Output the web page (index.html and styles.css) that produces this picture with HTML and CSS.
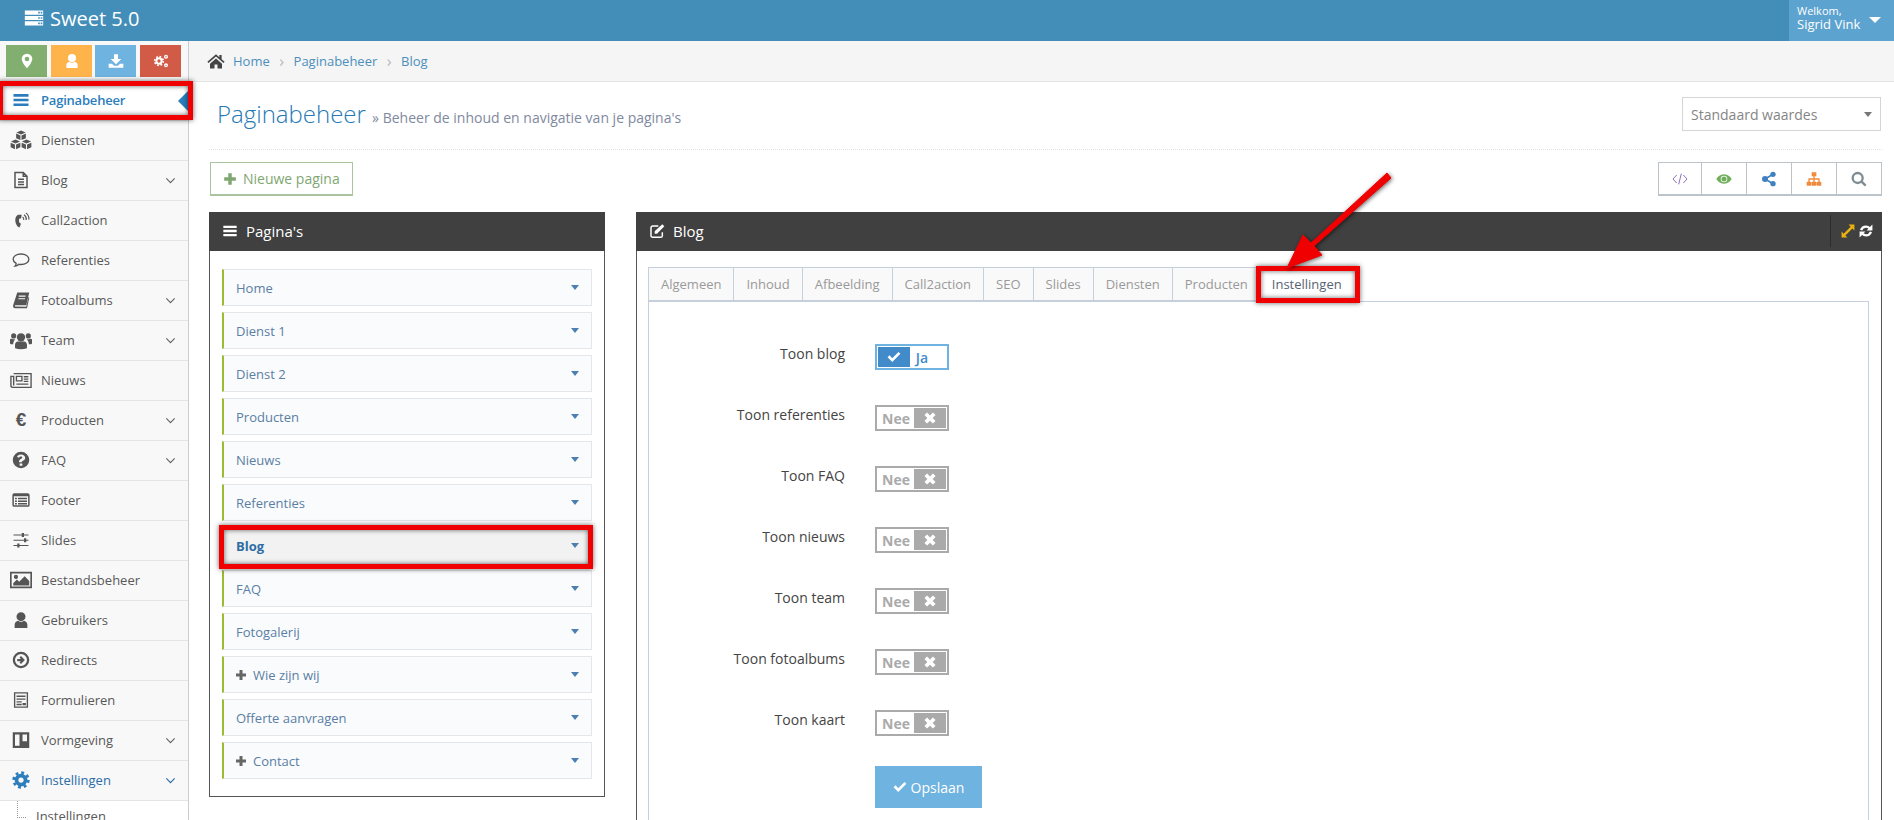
FILE: index.html
```html
<!DOCTYPE html>
<html lang="nl">
<head>
  <meta charset="UTF-8" />
  <title>Sweet 5.0 | Paginabeheer</title>
  <link rel="stylesheet" href="styles.css">
</head>
<body>

<svg class="sprite" xmlns="http://www.w3.org/2000/svg">
  <symbol id="i-server" viewBox="0 0 24 24"><path fill-rule="evenodd" d="M1 3h22v5H1zM17 4.500v2h2v-2zM20 4.500v2h2v-2zM1 9.500h22v5H1zM17 11v2h2v-2zM20 11v2h2v-2zM1 16h22v5H1zM17 17.500v2h2v-2zM20 17.500v2h2v-2z"/></symbol>
  <symbol id="i-marker" viewBox="0 0 24 24"><path fill-rule="evenodd" d="M12 1a8 8 0 0 0-8 8c0 5 8 14 8 14s8-9 8-14a8 8 0 0 0-8-8zm0 11.500a3.500 3.500 0 1 1 0-7 3.500 3.500 0 0 1 0 7z"/></symbol>
  <symbol id="i-user" viewBox="0 0 24 24"><path d="M12 1.500a6 6 0 1 1 0 12 6 6 0 0 1 0-12zM3.500 22.500v-4c0-3.500 2.500-5 4.500-5.500 1 1 2.500 1.500 4 1.500s3-.5 4-1.500c2 .5 4.500 2 4.500 5.500v4z"/></symbol>
  <symbol id="i-download" viewBox="0 0 24 24"><path d="M9 2h6v7h5l-8 8-8-8h5zM1 16h5l3 3h6l3-3h5v6H1z"/></symbol>
  <symbol id="i-cogs" viewBox="0 0 24 24"><g fill="none" stroke="currentColor"><circle cx="9" cy="12" r="4" stroke-width="3"/><circle cx="9" cy="12" r="6.500" stroke-width="2.500" stroke-dasharray="2.600 2.500"/><circle cx="19.500" cy="5.500" r="2" stroke-width="2"/><circle cx="19.500" cy="18.500" r="2" stroke-width="2"/></g></symbol>
  <symbol id="i-bars" viewBox="0 0 24 24"><path d="M2 4h20v3.500H2zM2 10.250h20v3.500H2zM2 16.500h20V20H2z"/></symbol>
  <symbol id="i-cubes" viewBox="0 0 24 24"><path d="M12 1.500l5 2.200-5 2.200-5-2.200zM6.700 5l4.700 2v5l-4.700-2zM17.300 5l-4.700 2v5l4.700-2zM6 11.500l5 2.200-5 2.200-5-2.200zM.7 15l4.700 2v5L.7 20zM11.300 15l-4.700 2v5l4.700-2zM18 11.500l5 2.200-5 2.200-5-2.200zM12.700 15l4.700 2v5l-4.700-2zM23.300 15l-4.700 2v5l4.700-2z"/></symbol>
  <symbol id="i-file" viewBox="0 0 24 24"><path fill="none" stroke="currentColor" stroke-width="2" d="M4 2h11l5 5v15H4zM15 2v5h5M8 11h8M8 14.500h8M8 18h8"/></symbol>
  <symbol id="i-phone" viewBox="0 0 24 24"><path d="M8 5c-3 2-4 5-3.500 9S7 21 10 22l2-5-2-1.500c-1-2-1-4 0-5.500h2l1-5z"/><path fill="none" stroke="currentColor" stroke-width="1.500" d="M14 8a3.500 3.500 0 0 1 1.500 4M16 5a7 7 0 0 1 3 7M18.500 2.500a10 10 0 0 1 4 9"/></symbol>
  <symbol id="i-comment" viewBox="0 0 24 24"><path fill="none" stroke="currentColor" stroke-width="1.800" d="M12 4c6 0 10.500 3 10.500 7s-4.500 7-10.500 7c-1 0-2 0-3-.3-1.500 1.500-3.500 2.300-5 2.500 1-1 1.500-2.500 1.500-3.700C3 15 1.500 13 1.500 11c0-4 4.500-7 10.500-7z"/></symbol>
  <symbol id="i-book" viewBox="0 0 24 24"><path d="M7 2h16l-4 17H5c-1 0-1.500.5-1 1.500l15 .5 3-13 1 1-3 14H4c-2 0-3-2-2.500-4zM9 6v1.500h9V6zM8.500 9.500V11h9V9.500z" fill-rule="evenodd"/></symbol>
  <symbol id="i-group" viewBox="0 0 24 24"><circle cx="12" cy="9" r="4.500"/><circle cx="4" cy="7.500" r="2.800"/><circle cx="20" cy="7.500" r="2.800"/><path d="M5.500 21v-4c0-2 1.500-3.500 3-3.500h7c1.500 0 3 1.500 3 3.500v4c-4 1.500-9 1.500-13 0zM0 11.500c0-.8 1-1 2-1 1 .8 2.500.8 3.500.3-.3 1-1 1.700-1.500 3-.5 1-.5 2-.5 2.700H1c-.5 0-1-.5-1-1zM24 11.500c0-.8-1-1-2-1-1 .8-2.500.8-3.500.3.300 1 1 1.700 1.500 3 .5 1 .5 2 .5 2.700H23c.5 0 1-.5 1-1z"/></symbol>
  <symbol id="i-news" viewBox="0 0 24 24"><path fill="none" stroke="currentColor" stroke-width="1.500" d="M4 5h19v15H3c-1.200 0-2-.8-2-2V8h3v10M7 8h6v5H7zM15 8.500h5M15 11h5M15 13.500h5M7 16.500h13"/></symbol>
  <symbol id="i-question" viewBox="0 0 24 24"><path fill-rule="evenodd" d="M12 1a11 11 0 1 1 0 22 11 11 0 0 1 0-22zM10.200 16.500v3.300h3.600v-3.300zM12 4.500c-3 0-4.700 1.500-5.200 3.500l2.600 1c.4-1 1.200-1.700 2.400-1.700 1.300 0 2 .6 2 1.400 0 1.800-4.400 1.900-4.400 5.600V15h3.600c0-2.400 4.600-2.300 4.600-6.100 0-2.700-2.600-4.400-5.600-4.400z"/></symbol>
  <symbol id="i-list" viewBox="0 0 24 24"><path fill-rule="evenodd" d="M3 3h18a2.500 2.500 0 0 1 2.500 2.500v13A2.500 2.500 0 0 1 21 21H3a2.500 2.500 0 0 1-2.500-2.500v-13A2.500 2.500 0 0 1 3 3zM2.500 7v11.500c0 .300.200.500.500.500h18c.300 0 .500-.2.500-.5V7zM4 9h2.500v2H4zM8 9h12v2H8zM4 12.500h2.500v2H4zM8 12.500h12v2H8zM4 16h2.500v2H4zM8 16h12v2H8z"/></symbol>
  <symbol id="i-sliders" viewBox="0 0 24 24"><path d="M2 4.500h20v1.500H2zM2 11.500h20V13H2zM2 18.500h20V20H2z"/><path d="M13 2.500h3v5.500h-3zM16 9.500h3V15h-3zM7 16.500h3V22H7z"/></symbol>
  <symbol id="i-picture" viewBox="0 0 24 24"><path fill-rule="evenodd" d="M0 3h24v18H0zM1.800 4.800v14.400h20.400V4.800z"/><circle cx="6.500" cy="8.700" r="2.300"/><path d="M3.500 18v-2.500l4-4 2.500 2.500 6-6 5 5V18z"/></symbol>
  <symbol id="i-circle-arrow" viewBox="0 0 24 24"><path fill-rule="evenodd" d="M12 1a11 11 0 1 1 0 22 11 11 0 0 1 0-22zM12 4a8 8 0 1 0 0 16 8 8 0 0 0 0-16zM12 6.800l5.200 5.200-5.200 5.200-2-2 1.800-1.700H7v-3h4.800L10 8.800z"/></symbol>
  <symbol id="i-form" viewBox="0 0 24 24"><path fill="none" stroke="currentColor" stroke-width="1.800" d="M3.500 2.500h17v19h-17zM6 7h12M6 10.800h12M6 14.500h7M6 18h7" /><path d="M14 16h4.500v3H14z"/></symbol>
  <symbol id="i-trello" viewBox="0 0 24 24"><path fill-rule="evenodd" d="M1 1.500h22v21H1zM4 4.500v15h6v-15zM14 4.500v9h6v-9z"/></symbol>
  <symbol id="i-cog" viewBox="0 0 24 24"><g fill="none" stroke="currentColor"><circle cx="12" cy="12" r="6" stroke-width="5"/><circle cx="12" cy="12" r="9.800" stroke-width="3.500" stroke-dasharray="3.800 3.900"/></g></symbol>
  <symbol id="i-home" viewBox="0 0 24 24"><path d="M12 3L.5 13l1.500 1.700L12 6l10 8.700 1.500-1.700-4-3.500V4h-3v3zM4 15.500V22h6v-5.500h4V22h6v-6.500L12 8.500z"/></symbol>
  <symbol id="i-chevron" viewBox="0 0 24 24"><path fill="none" stroke="currentColor" stroke-width="2.600" d="M3 7.500l9 9 9-9"/></symbol>
  <symbol id="i-plus" viewBox="0 0 24 24"><path d="M9 2h6v7h7v6h-7v7H9v-7H2V9h7z"/></symbol>
  <symbol id="i-edit" viewBox="0 0 24 24"><path fill="none" stroke="currentColor" stroke-width="2.200" d="M20 14v5a2.500 2.500 0 0 1-2.500 2.500h-12A2.500 2.500 0 0 1 3 19V7a2.500 2.500 0 0 1 2.500-2.500H14"/><path d="M20 2l3 3-11 11H8.500v-3.500z"/></symbol>
  <symbol id="i-code" viewBox="0 0 24 24"><path fill="none" stroke="currentColor" stroke-width="1.500" d="M7 6l-5.500 6L7 18M17 6l5.500 6L17 18M14 4l-4 16"/></symbol>
  <symbol id="i-eye" viewBox="0 0 24 24"><path fill-rule="evenodd" d="M12 5c5.500 0 9.500 3.500 11.500 7-2 3.500-6 7-11.500 7S2.500 15.500.5 12C2.500 8.500 6.500 5 12 5zM12 7a5 5 0 1 0 0 10 5 5 0 0 0 0-10z"/><circle cx="12" cy="12" r="3.800"/></symbol>
  <symbol id="i-share" viewBox="0 0 24 24"><circle cx="18" cy="5" r="4"/><circle cx="18" cy="19" r="4"/><circle cx="6" cy="12" r="4.500"/><path fill="none" stroke="currentColor" stroke-width="2.500" d="M18 5L6 12l12 7"/></symbol>
  <symbol id="i-sitemap" viewBox="0 0 24 24"><path d="M8.500 2h7v6h-2.500v3H20.500v5H22a1 1 0 0 1 1 1v4a1 1 0 0 1-1 1h-5a1 1 0 0 1-1-1v-4a1 1 0 0 1 1-1h1.500v-3H13v3h1.500a1 1 0 0 1 1 1v4a1 1 0 0 1-1 1h-5a1 1 0 0 1-1-1v-4a1 1 0 0 1 1-1H11v-3H5.500v3H7a1 1 0 0 1 1 1v4a1 1 0 0 1-1 1H2a1 1 0 0 1-1-1v-4a1 1 0 0 1 1-1h1.500v-5H11V8H8.500z"/></symbol>
  <symbol id="i-search" viewBox="0 0 24 24"><path fill="none" stroke="currentColor" stroke-width="3.500" d="M10 3a7.500 7.500 0 1 1 0 15 7.500 7.500 0 0 1 0-15zM15.500 15.500l6.500 6.500"/></symbol>
  <symbol id="i-arrows" viewBox="0 0 24 24"><path d="M13 1h10v10l-3.500-3.500L7.500 19.500 11 23H1V13l3.500 3.500 12-12z"/></symbol>
  <symbol id="i-refresh" viewBox="0 0 24 24"><path fill="none" stroke="currentColor" stroke-width="4" d="M3.500 10.500C5 6.500 8 4.500 12 4.500c2.500 0 4.500 1 6 2.500M20.500 13.500c-1.500 4-4.500 6-8.500 6-2.500 0-4.500-1-6-2.500"/><path d="M23 1v10H13zM1 23V13h10z"/></symbol>
  <symbol id="i-check" viewBox="0 0 24 24"><path d="M9 20.500L1 12.500l3.300-3.300L9 14 19.700 3.300 23 6.600z"/></symbol>
  <symbol id="i-times" viewBox="0 0 24 24"><path d="M7 2.500l5 5 5-5 4.500 4.500-5 5 5 5-4.500 4.500-5-5-5 5L2.500 17l5-5-5-5z"/></symbol>
</svg>

<!-- bovenbalk -->
<header class="topbar">
  <div class="brand">
    <svg class="brand-icon"><use href="#i-server"/></svg>
    <span>Sweet 5.0</span>
  </div>
  <div class="user-menu">
    <div class="user-text"><small>Welkom,</small><span>Sigrid Vink</span></div>
    <span class="user-caret"></span>
  </div>
</header>

<div class="main">
  <!-- zijbalk -->
  <aside class="sidebar">
    <div class="shortcuts">
      <a class="sc sc-green"><svg><use href="#i-marker"/></svg></a>
      <a class="sc sc-orange"><svg><use href="#i-user"/></svg></a>
      <a class="sc sc-blue"><svg><use href="#i-download"/></svg></a>
      <a class="sc sc-red"><svg><use href="#i-cogs"/></svg></a>
    </div>
    <ul class="nav">
      <li class="active"><svg class="ni"><use href="#i-bars"/></svg><span>Paginabeheer</span></li>
      <li><svg class="ni ni-lg"><use href="#i-cubes"/></svg><span>Diensten</span></li>
      <li><svg class="ni"><use href="#i-file"/></svg><span>Blog</span><svg class="chev"><use href="#i-chevron"/></svg></li>
      <li><svg class="ni"><use href="#i-phone"/></svg><span>Call2action</span></li>
      <li><svg class="ni"><use href="#i-comment"/></svg><span>Referenties</span></li>
      <li><svg class="ni"><use href="#i-book"/></svg><span>Fotoalbums</span><svg class="chev"><use href="#i-chevron"/></svg></li>
      <li><svg class="ni ni-lg"><use href="#i-group"/></svg><span>Team</span><svg class="chev"><use href="#i-chevron"/></svg></li>
      <li><svg class="ni ni-lg"><use href="#i-news"/></svg><span>Nieuws</span></li>
      <li><b class="ni euro">€</b><span>Producten</span><svg class="chev"><use href="#i-chevron"/></svg></li>
      <li><svg class="ni"><use href="#i-question"/></svg><span>FAQ</span><svg class="chev"><use href="#i-chevron"/></svg></li>
      <li><svg class="ni"><use href="#i-list"/></svg><span>Footer</span></li>
      <li><svg class="ni"><use href="#i-sliders"/></svg><span>Slides</span></li>
      <li><svg class="ni ni-lg"><use href="#i-picture"/></svg><span>Bestandsbeheer</span></li>
      <li><svg class="ni"><use href="#i-user"/></svg><span>Gebruikers</span></li>
      <li><svg class="ni"><use href="#i-circle-arrow"/></svg><span>Redirects</span></li>
      <li><svg class="ni"><use href="#i-form"/></svg><span>Formulieren</span></li>
      <li><svg class="ni"><use href="#i-trello"/></svg><span>Vormgeving</span><svg class="chev"><use href="#i-chevron"/></svg></li>
      <li class="open"><svg class="ni"><use href="#i-cog"/></svg><span>Instellingen</span><svg class="chev"><use href="#i-chevron"/></svg></li>
      <li class="sub"><span>Instellingen</span></li>
    </ul>
  </aside>

  <main class="content">
    <div class="breadcrumbs">
      <svg class="home-icon"><use href="#i-home"/></svg>
      <a>Home</a><i>›</i><a>Paginabeheer</a><i>›</i><a>Blog</a>
    </div>

    <div class="page">
      <div class="page-header">
        <h1>Paginabeheer <small>» Beheer de inhoud en navigatie van je pagina's</small></h1>
        <div class="select-box"><span>Standaard waardes</span><span class="select-caret"></span></div>
      </div>

      <div class="toolbar">
        <button class="btn-new"><svg><use href="#i-plus"/></svg>Nieuwe pagina</button>
        <div class="btn-group">
          <a class="c-purple"><svg><use href="#i-code"/></svg></a>
          <a class="c-green"><svg><use href="#i-eye"/></svg></a>
          <a class="c-blue"><svg><use href="#i-share"/></svg></a>
          <a class="c-orange"><svg><use href="#i-sitemap"/></svg></a>
          <a class="c-grey"><svg><use href="#i-search"/></svg></a>
        </div>
      </div>

      <div class="columns">
        <!-- paginalijst -->
        <section class="panel panel-left">
          <div class="panel-head"><svg><use href="#i-bars"/></svg><span>Pagina's</span></div>
          <div class="panel-body">
            <div class="page-item"><span>Home</span></div>
            <div class="page-item"><span>Dienst 1</span></div>
            <div class="page-item"><span>Dienst 2</span></div>
            <div class="page-item"><span>Producten</span></div>
            <div class="page-item"><span>Nieuws</span></div>
            <div class="page-item"><span>Referenties</span></div>
            <div class="page-item current"><span>Blog</span></div>
            <div class="page-item"><span>FAQ</span></div>
            <div class="page-item"><span>Fotogalerij</span></div>
            <div class="page-item"><svg><use href="#i-plus"/></svg><span>Wie zijn wij</span></div>
            <div class="page-item"><span>Offerte aanvragen</span></div>
            <div class="page-item"><svg><use href="#i-plus"/></svg><span>Contact</span></div>
          </div>
        </section>

        <!-- blog instellingen -->
        <section class="panel panel-right">
          <div class="panel-head">
            <svg><use href="#i-edit"/></svg><span>Blog</span>
            <div class="panel-tools">
              <svg class="tool-yellow"><use href="#i-arrows"/></svg>
              <svg class="tool-white"><use href="#i-refresh"/></svg>
            </div>
          </div>
          <div class="panel-body body-tabs">
            <div class="tabs">
              <a>Algemeen</a><a>Inhoud</a><a>Afbeelding</a><a>Call2action</a><a>SEO</a><a>Slides</a><a>Diensten</a><a>Producten</a><a class="tab-on">Instellingen</a>
            </div>
            <form class="tab-pane">
              <div class="row"><label>Toon blog</label><span class="toggle on"><b><svg><use href="#i-check"/></svg></b><em>Ja</em></span></div>
              <div class="row"><label>Toon referenties</label><span class="toggle"><em>Nee</em><b><svg><use href="#i-times"/></svg></b></span></div>
              <div class="row"><label>Toon FAQ</label><span class="toggle"><em>Nee</em><b><svg><use href="#i-times"/></svg></b></span></div>
              <div class="row"><label>Toon nieuws</label><span class="toggle"><em>Nee</em><b><svg><use href="#i-times"/></svg></b></span></div>
              <div class="row"><label>Toon team</label><span class="toggle"><em>Nee</em><b><svg><use href="#i-times"/></svg></b></span></div>
              <div class="row"><label>Toon fotoalbums</label><span class="toggle"><em>Nee</em><b><svg><use href="#i-times"/></svg></b></span></div>
              <div class="row"><label>Toon kaart</label><span class="toggle"><em>Nee</em><b><svg><use href="#i-times"/></svg></b></span></div>
              <button type="button" class="btn-save"><svg><use href="#i-check"/></svg>Opslaan</button>
            </form>
          </div>
        </section>
      </div>
    </div>
  </main>
</div>

<!-- rode markeringen uit de handleiding -->
<span class="mark mark-nav"></span>
<span class="mark mark-blog"></span>
<span class="mark mark-tab"></span>
<svg class="mark-arrow" viewBox="0 0 120 110">
  <path d="M116 8L39 76l8 9-35 13 16-33 8 8L112 3z" fill="#f00000" stroke="#f00000" stroke-width="1"/>
</svg>

</body>
</html>
```

FILE: styles.css
```css
* {
  box-sizing: border-box;
}

html, body {
  margin: 0;
  padding: 0;
  height: 820px;
  overflow: hidden;
  font-family: 'Open Sans', sans-serif;
  font-size: 13px;
  color: #393939;
  background: #fff;
}

.sprite {
  display: none;
}

svg {
  fill: currentColor;
}

/* bovenbalk */
.topbar {
  height: 41px;
  background: #438eb9;
  display: flex;
  justify-content: space-between;
  color: #fff;
}

.brand {
  display: flex;
  align-items: center;
  padding: 0 0 5px 24px;
  font-size: 20px;
  gap: 6px;
}

.brand-icon {
  width: 20px;
  height: 20px;
}

.user-menu {
  width: 105px;
  background: #5ca3cf;
  display: flex;
  align-items: center;
  padding: 0 0 6px 8px;
  gap: 9px;
}

.user-text {
  display: flex;
  flex-direction: column;
  font-size: 13px;
  line-height: 15px;
}

.user-text small {
  font-size: 11px;
  line-height: 13px;
}

.user-caret {
  border: 6px solid transparent;
  border-top-color: #fff;
  border-bottom: 0;
  margin-top: 5px;
}

.main {
  display: flex;
  height: 779px;
}

/* zijbalk */
.sidebar {
  width: 189px;
  flex: none;
  background: #f8f8f8;
  border-right: 1px solid #ccc;
}

.shortcuts {
  height: 40px;
  display: flex;
  gap: 4px;
  padding: 4px 0 0 6px;
}

.sc {
  width: 41px;
  height: 32px;
  display: flex;
  align-items: center;
  justify-content: center;
  color: #fff;
}

.sc:nth-child(3) { margin-left: -1px; }

.sc svg {
  width: 16px;
  height: 16px;
}

.sc-green { background: #82af6f; }
.sc-orange { background: #ffb44b; }
.sc-blue { background: #6fb3e0; }
.sc-red { background: #d15b47; }

.nav {
  list-style: none;
  margin: 0;
  padding: 0;
}

.nav li {
  height: 40px;
  display: flex;
  align-items: center;
  position: relative;
  border-bottom: 1px solid #e5e5e5;
  padding: 0 0 2px 41px;
  color: #585858;
}

.nav .ni {
  position: absolute;
  left: 10px;
  top: 10px;
  width: 22px;
  height: 18px;
  color: #555;
}

.nav .ni-lg {
  top: 8px;
  height: 22px;
}

.nav .euro {
  font-size: 19px;
  line-height: 18px;
  text-align: center;
  font-family: 'Liberation Sans', sans-serif;
}

.chev {
  position: absolute;
  right: 12px;
  top: 14px;
  width: 11px;
  height: 11px;
  color: #666;
}

.nav li.active {
  background: #fff;
  color: #2b7dbc;
  font-weight: 600;
  letter-spacing: -.2px;
}

.nav li.active .ni,
.nav li.open .ni {
  color: #2b7dbc;
}

.nav li.active::after {
  content: "";
  position: absolute;
  right: 0;
  top: 10px;
  border: 10px solid transparent;
  border-right-color: #2b7dbc;
  border-left: 0;
}

.nav li.open {
  color: #2b6ca8;
}

.nav li.open .chev {
  color: #2b6ca8;
}

.nav li.sub {
  background: #fff;
  padding-left: 36px;
  align-items: flex-start;
  padding-top: 6px;
  border-bottom: 0;
}

.nav li.sub::before {
  content: "";
  position: absolute;
  left: 17px;
  top: 0;
  height: 16px;
  width: 8px;
  border-left: 1px dotted #999;
  border-bottom: 1px dotted #999;
}

/* inhoud */
.content {
  flex: 1;
  min-width: 0;
}

.breadcrumbs {
  height: 41px;
  background: #f5f5f5;
  border-bottom: 1px solid #e5e5e5;
  display: flex;
  align-items: center;
  padding-left: 18px;
  color: #4c8fbd;
}

.home-icon {
  width: 18px;
  height: 18px;
  color: #444;
  margin-right: 8px;
}

.breadcrumbs a {
  color: #4c8fbd;
}

.breadcrumbs i {
  font-style: normal;
  color: #b2b6bf;
  font-size: 16px;
  margin: 0 9.5px;
  line-height: 16px;
}

.page {
  padding: 15px 12px 0 20px;
}

.page-header {
  height: 53px;
  border-bottom: 1px dotted #e2e2e2;
  display: flex;
  justify-content: space-between;
  padding-bottom: 18px;
}

.page-header h1 {
  margin: 0;
  padding-left: 8px;
  font-size: 24px;
  font-weight: 300;
  color: #2679b5;
  line-height: 34px;
}

.page-header small {
  font-size: 14px;
  font-weight: 400;
  color: #8089a0;
}

.select-box {
  width: 199px;
  height: 34px;
  margin-right: 1px;
  border: 1px solid #d5d5d5;
  display: flex;
  align-items: center;
  justify-content: space-between;
  padding: 0 8px;
  font-size: 14px;
  color: #858585;
}

.select-caret {
  border: 4px solid transparent;
  border-top: 5px solid #777;
  border-bottom: 0;
}

.toolbar {
  display: flex;
  justify-content: space-between;
  margin: 12px 0 16px;
  padding-left: 1px;
}

.btn-new {
  width: 143px;
  height: 34px;
  display: flex;
  align-items: center;
  gap: 6px;
  padding: 0 0 0 12px;
  white-space: nowrap;
  background: #fff;
  border: 1px solid #a9c49e;
  border-bottom-width: 2px;
  color: #80a772;
  font: 14px 'Open Sans', sans-serif;
}

.btn-new svg {
  width: 14px;
  height: 14px;
}

.btn-group {
  display: flex;
  height: 34px;
}

.btn-group a {
  width: 45px;
  display: flex;
  align-items: center;
  justify-content: center;
  border: 1px solid #bcc3c9;
  border-bottom-width: 2px;
  border-left-width: 0;
}

.btn-group a:first-child {
  width: 44px;
  border-left-width: 1px;
}

.btn-group svg {
  width: 16px;
  height: 16px;
}

.c-purple { color: #8f6fc0; }
.c-green { color: #6fae5a; }
.c-blue { color: #3f80c0; }
.c-orange { color: #f08b3c; }
.c-grey { color: #7f8c92; }

.columns {
  display: flex;
  gap: 31px;
}

.panel-left {
  width: 396px;
  flex: none;
}

.panel-right {
  flex: 1;
  min-width: 0;
}

.panel-head {
  height: 39px;
  background: #404040;
  color: #fff;
  display: flex;
  align-items: center;
  padding: 0 0 2px 13px;
  gap: 8px;
  font-size: 15px;
}

.panel-head > svg {
  width: 16px;
  height: 16px;
}

.panel-body {
  border: 1px solid #555;
  border-top: 0;
  background: #fff;
  padding: 18px 12px 17px;
  display: flex;
  flex-direction: column;
  gap: 6px;
}

.page-item {
  height: 37px;
  border: 1px solid #e3e6ea;
  border-left: 2px solid #9abc32;
  background: #f9fbfd;
  display: flex;
  align-items: center;
  padding-left: 12px;
  gap: 6px;
  color: #5b7ea3;
  position: relative;
}

.page-item::after {
  content: "";
  position: absolute;
  right: 12px;
  top: 15px;
  border: 4px solid transparent;
  border-top: 5px solid #4c7fb0;
  border-bottom: 0;
}

.page-item svg {
  width: 12px;
  height: 12px;
  color: #666;
  margin-left: -1px;
}

.page-item.current {
  background: #f2f2f2;
  font-weight: 700;
  color: #2e6da4;
}

.panel-tools {
  margin-left: auto;
  height: 32px;
  display: flex;
  align-items: center;
  gap: 4px;
  border-left: 1px solid #2c2c2c;
  padding: 0 9px 0 10px;
}

.panel-tools svg {
  width: 14px;
  height: 14px;
}

.tool-yellow { color: #e8b110; }
.tool-white { color: #fff; }

.body-tabs {
  height: 620px;
  padding: 16px 12px 0 11px;
  display: block;
}

.tabs {
  display: flex;
  height: 35px;
  border-bottom: 1px solid #c5d0dc;
}

.tabs a {
  padding: 0 12px;
  height: 34px;
  line-height: 32px;
  background: #f9f9f9;
  border: 1px solid #c5d0dc;
  border-left-width: 0;
  color: #999;
}

.tabs a:first-child {
  border-left-width: 1px;
}

.tabs a.tab-on {
  background: #fff;
  color: #576373;
  border: 0;
  padding: 0 11px;
  margin-left: 0;
  height: 35px;
  line-height: 34px;
}

.tab-pane {
  height: 600px;
  border: 1px solid #c5d0dc;
  border-top: 0;
  padding: 42px 0 0 226px;
}

.row {
  display: flex;
  height: 26px;
  margin-bottom: 35px;
  position: relative;
}

.row label {
  position: absolute;
  right: 100%;
  margin-right: 30px;
  top: 0;
  white-space: nowrap;
  font-size: 14px;
  line-height: 20px;
  color: #444;
}

.toggle {
  width: 74px;
  height: 26px;
  border: 2px solid #aaa;
  padding: 1px;
  display: flex;
  color: #aaa;
  font-size: 14px;
}

.toggle em {
  font-style: normal;
  font-weight: 700;
  flex: 1;
  text-align: center;
  line-height: 21px;
}

.toggle b {
  width: 32px;
  background: #aaa;
  color: #fff;
  display: flex;
  align-items: center;
  justify-content: center;
}

.toggle svg {
  width: 14px;
  height: 14px;
}

.toggle.on {
  border-color: #6fb3e0;
}

.toggle.on b {
  background: #428bca;
}

.toggle.on em {
  color: #428bca;
  font-weight: 600;
  padding-right: 12px;
}

.btn-save {
  width: 107px;
  height: 42px;
  margin-top: -5px;
  border: 0;
  background: #6fb3e0;
  color: #fff;
  font: 14px 'Open Sans', sans-serif;
  display: flex;
  align-items: center;
  justify-content: center;
  gap: 4px;
}

.btn-save svg {
  width: 14px;
  height: 14px;
}

/* rode kaders */
.mark {
  position: absolute;
  border: 5px solid #f00000;
  box-shadow: 0 0 5px rgba(0,0,0,.6), inset 0 0 5px rgba(0,0,0,.6);
}

.mark-nav {
  left: -2px;
  top: 81px;
  width: 195px;
  height: 39px;
}

.mark-blog {
  left: 219px;
  top: 525px;
  width: 374px;
  height: 44px;
}

.mark-tab {
  left: 1256px;
  top: 266px;
  width: 104px;
  height: 37px;
}

.mark-arrow {
  position: absolute;
  left: 1275px;
  top: 170px;
  width: 120px;
  height: 110px;
  filter: drop-shadow(1px 1px 2px rgba(0,0,0,.6));
}
```
